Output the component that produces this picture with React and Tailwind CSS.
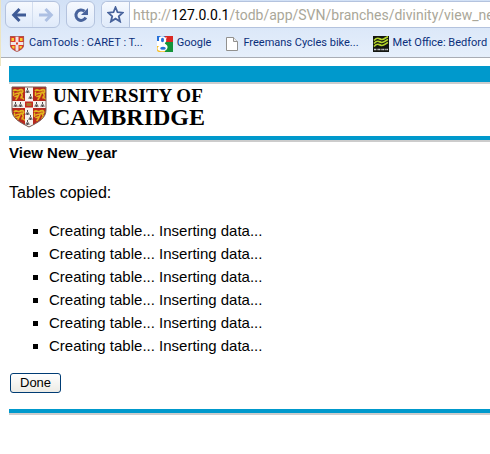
import React from "react";

const rows = [1, 2, 3, 4, 5, 6];

function BackIcon() {
  return (
    <svg width="16" height="16" viewBox="0 0 16 16" fill="none" stroke="#3f5b96" strokeWidth="3" aria-hidden="true">
      <path d="M8.500 2 2.700 8l5.800 6M3.500 8H15" />
    </svg>
  );
}

function ForwardIcon() {
  return (
    <svg width="16" height="16" viewBox="0 0 16 16" fill="none" stroke="#adc0e3" strokeWidth="3" aria-hidden="true">
      <path d="M7.500 2 13.300 8l-5.800 6M12.500 8H1" />
    </svg>
  );
}

function ReloadIcon() {
  return (
    <svg width="16" height="16" viewBox="0 0 16 16" aria-hidden="true">
      <path d="M11.5 4.200A5.200 5.200 0 1 0 12.800 10.500" fill="none" stroke="#48639c" strokeWidth="3" />
      <path d="M15 1v7H8z" fill="#48639c" />
    </svg>
  );
}

function StarIcon() {
  return (
    <svg width="17" height="17" viewBox="0 0 16 16" aria-hidden="true">
      <path
        d="M8 1.200 9.900 5.900l5 .4-3.800 3.300 1.200 5L8 11.900l-4.300 2.700 1.200-5L1.100 6.300l5-.4z"
        fill="#f6f9ff"
        stroke="#48639c"
        strokeWidth="1.700"
      />
    </svg>
  );
}

function ShieldFavicon() {
  return (
    <svg width="16" height="16" viewBox="0 0 16 16" aria-hidden="true">
      <path d="M1 0h14v9c0 3-3 5-7 7-4-2-7-4-7-7z" fill="#dc3a28" />
      <path d="M6.500 0h3v15L8 16l-1.500-1zM1 6h14v3H1z" fill="#f0e6e8" />
      <path d="M2.500 2H5v3H2.500zM11 2h2.500v3H11zM3 10h2.500v2.500h-2zM10.500 10H13l-.5 2.500h-2z" fill="#f7cf35" />
      <path d="M7 6.500h2v2H7z" fill="#dc3a28" />
      <path d="M1.400.4h13.200V9c0 2.800-2.800 4.700-6.600 6.500C4.200 13.700 1.400 11.800 1.400 9z" fill="none" stroke="#a05a59" strokeWidth=".8" />
    </svg>
  );
}

function GoogleFavicon() {
  return (
    <svg width="16" height="16" viewBox="0 0 16 16" aria-hidden="true">
      <path d="M0 0h9v5H0z" fill="#2670d8" />
      <path d="M8 0h8v6H8z" fill="#db2924" />
      <path d="M8 6h8v10H8z" fill="#15943a" />
      <path d="M0 5h6v6H0z" fill="#fff" />
      <path d="M0 10h8v6H2c-1 0-2-1-2-2z" fill="#f7be23" />
      <path d="M2 1.500c2-2 5-1.500 6 0h2L9 3c1 3-1 4.500-3 4.500s-4-1-4-3z" fill="#fff" />
      <ellipse cx="5.500" cy="4" rx="1.500" ry="2.300" fill="#2670d8" />
      <path d="M6 7c4 1 5.500 3.500 4 6s-5 3-8 1.500-1-5 2-5c2 0 3-1 2-2.500z" fill="#fff" />
      <ellipse cx="6" cy="12.300" rx="2.800" ry="1.500" fill="#2670d8" />
    </svg>
  );
}

function PageFavicon() {
  return (
    <svg width="14" height="16" viewBox="0 0 14 16" aria-hidden="true">
      <path d="M1.500 1.500h7l4 4v9h-11z" fill="#fff" stroke="#92918f" />
      <path d="M8.500 1.500v4h4" fill="#eee" stroke="#92918f" />
    </svg>
  );
}

function MetFavicon() {
  return (
    <svg width="16" height="16" viewBox="0 0 16 16" aria-hidden="true">
      <path d="M0 0h16v16H0z" fill="#131611" />
      <path
        d="M1 4.500C5 0 6.500 3.500 9 3.500S13 1 15 .8M1 7.500C5 3 6.500 6.500 9 6.500S13 4 15 3.500M1 10.500C5 6 6.500 9.500 9 9.500S13 7 15 6.500"
        fill="none"
        stroke="#b4d52b"
        strokeWidth="1.700"
      />
      <path d="M1 13.500h14" stroke="#c8c8c8" strokeWidth="1.500" strokeDasharray="2 .6 1 .5" />
    </svg>
  );
}

function Lion({ x, y }) {
  return (
    <g transform={`translate(${x} ${y})`} fill="none" stroke="#e3b51d" strokeLinecap="round">
      <path d="M1.500 2.500c2-1.500 3 .5 5 0s3-2 4 0-1 2.500-2.500 2" strokeWidth="1.800" />
      <path d="M9 4C7 6 5 4.500 3 6M7 6c0 2-2 2-4 2.500M9.500 5.500c1 1.500 1 3-.5 4.500M6 8.500 4 11.500M9 9l2.500 2M1.500 4.500v3" strokeWidth="1.500" />
    </g>
  );
}

function Ermine({ x, y }) {
  return <path transform={`translate(${x} ${y})`} d="M1.500 0v2M.5 2.500 0 5M1.500 2.500V5M2.500 2.500 3 5" stroke="#292326" strokeWidth=".8" />;
}

function Crest() {
  return (
    <svg width="36" height="42" viewBox="0 0 36 42" aria-hidden="true">
      <defs>
        <clipPath id="shield">
          <path d="M1 1h34v23c0 8-7 12-17 17C8 36 1 32 1 24z" />
        </clipPath>
      </defs>
      <g clipPath="url(#shield)">
        <path d="M0 0h36v42H0z" fill="#b8281e" />
        <Lion x={1} y={2} />
        <Lion x={23} y={2} />
        <Lion x={2} y={23} />
        <Lion x={22} y={23} />
        <path d="M14 0h8v42h-8zM0 15h36v7H0z" fill="#f7f3ef" />
        <Ermine x={15} y={2} />
        <Ermine x={18} y={8} />
        <Ermine x={15} y={24} />
        <Ermine x={18} y={29} />
        <Ermine x={15} y={34} />
        <Ermine x={3} y={16} />
        <Ermine x={8} y={16} />
        <Ermine x={24} y={16} />
        <Ermine x={30} y={16} />
        <path d="M14 15.500h8v6h-8z" fill="#c62a20" />
        <path d="M15.500 17h5v3h-5z" fill="#a9752a" />
      </g>
      <path d="M1 1h34v23c0 8-7 12-17 17C8 36 1 32 1 24z" fill="none" stroke="#775b55" />
    </svg>
  );
}

function Bookmark({ icon, children }) {
  return (
    <a href="#" className="flex shrink-0 items-center gap-1 whitespace-nowrap">
      {icon}
      <span>{children}</span>
    </a>
  );
}

function BrowserBar() {
  return (
    <header className="ml-px border-b border-[#a9adb5] bg-linear-to-b from-[#d2e1f6] to-[#e6effb]">
      <div className="flex h-7 items-stretch gap-1.5 pt-px pl-1">
        <div className="flex w-[55px] shrink-0 rounded-md border border-[#b4c3de] bg-linear-to-b from-[#f6f9fe] to-[#dfeafa]">
          <button type="button" aria-label="Back" className="flex flex-1 items-center justify-center border-r border-[#d3deef]">
            <BackIcon />
          </button>
          <button type="button" aria-label="Forward" className="flex flex-1 items-center justify-center">
            <ForwardIcon />
          </button>
        </div>
        <button type="button" aria-label="Reload" className="flex w-[29px] shrink-0 items-center justify-center rounded-md border border-[#b4c3de] bg-linear-to-b from-[#f6f9fe] to-[#dfeafa]">
          <ReloadIcon />
        </button>
        <div className="flex min-w-0 flex-1 rounded-l-md border border-r-0 border-[#b4c3de] bg-white">
          <button type="button" aria-label="Bookmark this page" className="flex w-7 shrink-0 items-center justify-center rounded-l-md border-r border-[#b4c3de] bg-linear-to-b from-[#f6f9fe] to-[#dfeafa]">
            <StarIcon />
          </button>
          <div className="min-w-0 flex-1 overflow-hidden pl-[3px] font-['Roboto',sans-serif] text-sm leading-[26px] whitespace-nowrap text-[#aaa799]">
            http://<span className="text-black">127.0.0.1</span>/todb/app/SVN/branches/divinity/view_ne
          </div>
        </div>
      </div>
      <nav aria-label="Bookmarks" className="flex h-[29px] items-center gap-3.5 overflow-hidden pt-0.5 pl-2 font-['Roboto',sans-serif] text-[11px] text-[#0b2f7a]">
        <Bookmark icon={<ShieldFavicon />}>CamTools : CARET : T...</Bookmark>
        <Bookmark icon={<GoogleFavicon />}>Google</Bookmark>
        <Bookmark icon={<PageFavicon />}>Freemans Cycles bike...</Bookmark>
        <Bookmark icon={<MetFavicon />}>Met Office: Bedford</Bookmark>
      </nav>
    </header>
  );
}

export default function App() {
  return (
    <div className="min-h-screen bg-white font-['Liberation_Sans',Arial,sans-serif] text-base text-black">
      <div className="bg-linear-to-r from-[#ece5c3] from-[1px] to-white to-[1px] pb-2">
        <BrowserBar />
      </div>
      <main className="pl-[9px]">
        <div className="h-[18px] border-b-2 border-[#cccccc] bg-[#0099cc]" />
        <div className="flex h-[52px] items-start gap-1.5 pt-0.5 pl-0.5">
          <Crest />
          <div className="font-['Liberation_Serif',serif] font-bold">
            <div className="text-[19px] leading-5">UNIVERSITY OF</div>
            <div className="text-2xl leading-[22px]">CAMBRIDGE</div>
          </div>
        </div>
        <div className="h-1.5 border-b-2 border-[#cccccc] bg-[#0099cc]" />
        <h1 className="pt-0.5 text-[15px] leading-[18px] font-bold">View New_year</h1>
        <p className="mt-[19px] leading-[23px]">Tables copied:</p>
        <ul className="mt-[15px] list-[square] pl-10 text-[15px] leading-[23px]">
          {rows.map((row) => (
            <li key={row}>Creating table... Inserting data...</li>
          ))}
        </ul>
        <button
          type="button"
          className="mt-4 ml-px block h-5 rounded-[3px] border border-[#003c74] bg-linear-to-b from-white to-[#ecebe5] px-[9px] text-[13px] leading-[18px]"
        >
          Done
        </button>
        <div className="mt-4 h-1.5 border-b-2 border-[#cccccc] bg-[#0099cc]" />
      </main>
    </div>
  );
}
